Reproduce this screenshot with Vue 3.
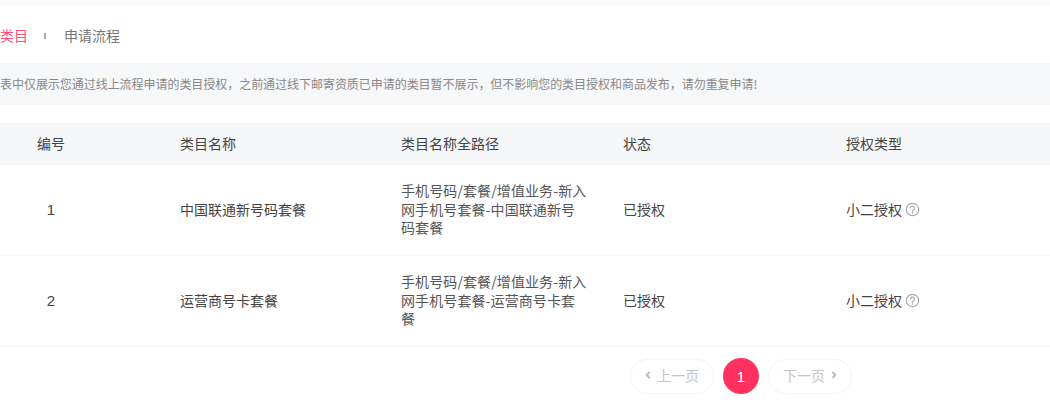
<script setup>
const rows = [
  { id: 1, name: '中国联通新号码套餐', path: ['手机号码/套餐/增值业务-新入', '网手机号套餐-中国联通新号', '码套餐'] },
  { id: 2, name: '运营商号卡套餐', path: ['手机号码/套餐/增值业务-新入', '网手机号套餐-运营商号卡套', '餐'] },
]
</script>

<template>
  <div class="page">
    <div class="strip"></div>
    <nav class="tabs">
      <span class="tab active">类目</span>
      <i class="sep"></i>
      <span class="tab">申请流程</span>
    </nav>
    <div class="notice">表中仅展示您通过线上流程申请的类目授权，之前通过线下邮寄资质已申请的类目暂不展示，但不影响您的类目授权和商品发布，请勿重复申请!</div>
    <div class="table">
      <div class="row head">
        <div class="num">编号</div>
        <div>类目名称</div>
        <div>类目名称全路径</div>
        <div>状态</div>
        <div>授权类型</div>
      </div>
      <div v-for="r in rows" :key="r.id" class="row body">
        <div class="num digit">{{ r.id }}</div>
        <div>{{ r.name }}</div>
        <div class="path"><div v-for="l in r.path" :key="l">{{ l }}</div></div>
        <div>已授权</div>
        <div class="auth">
          小二授权
          <svg class="help" width="15" height="15" viewBox="0 0 15 15" fill="none">
            <circle cx="7.5" cy="7.5" r="6.2" stroke="#aaa" stroke-width="1.2" />
            <path d="M5.5 6a2 2 0 1 1 3.1 1.7c-.7.4-1.1.8-1.1 1.6" stroke="#aaa" stroke-width="1.2" stroke-linecap="round" />
            <circle cx="7.5" cy="11" r=".8" fill="#aaa" />
          </svg>
        </div>
      </div>
    </div>
    <div class="pager">
      <button class="pg-btn" disabled>
        <svg width="6" height="8" viewBox="0 0 6 8" fill="none"><path d="M4.6 .8 1.8 4l2.8 3.2" stroke="#bbb" stroke-width="2" /></svg>
        上一页
      </button>
      <button class="pg-num">1</button>
      <button class="pg-btn" disabled>
        下一页
        <svg width="6" height="8" viewBox="0 0 6 8" fill="none"><path d="M1.4 .8 4.2 4 1.4 7.2" stroke="#bbb" stroke-width="2" /></svg>
      </button>
    </div>
  </div>
</template>

<style scoped>
.page {
  width: 1050px;
  height: 406px;
  overflow: hidden;
  background: #fff;
  font-family: "Noto Sans CJK SC", "Noto Sans", sans-serif;
  font-size: 14px;
  color: #444;
}
.strip {
  height: 6px;
  background: #fafafc;
}
.tabs {
  height: 57px;
  display: flex;
  align-items: center;
  box-sizing: border-box;
}
.tab {
  color: #777;
  line-height: 20px;
}
.tab.active {
  color: #ff4d78;
}
.sep {
  width: 2px;
  height: 6px;
  margin: 2px 18px 0 16px;
  background: #aaa;
}
.notice {
  height: 42px;
  line-height: 41px;
  background: #f7f8fa;
  font-size: 12px;
  letter-spacing: -0.04px;
  color: #888;
  white-space: nowrap;
}
.table {
  margin-top: 18px;
}
.row {
  display: grid;
  grid-template-columns: 180px 221px 222px 223px 1fr;
  align-items: center;
}
.head {
  height: 42px;
  background: #f6f7f9;
  padding-bottom: 2px;
  box-sizing: border-box;
}
.body {
  height: 91px;
  box-sizing: border-box;
  border-bottom: 1px solid #f5f5f5;
  padding-bottom: 2px;
}
.num {
  width: 102px;
  text-align: center;
}
.digit {
  font-size: 15px;
  font-family: "Liberation Sans", sans-serif;
}
.path {
  line-height: 18.5px;
  letter-spacing: 0.1px;
  color: #555;
  white-space: nowrap;
}
.auth {
  display: flex;
  align-items: center;
  gap: 3px;
}
.help {
  flex: none;
}
.pager {
  margin-top: 11px;
  margin-left: 630px;
  display: flex;
  align-items: center;
  gap: 9px;
}
.pg-btn {
  width: 84px;
  height: 35px;
  box-sizing: border-box;
  border: 1px solid #f5f5f5;
  border-radius: 18px;
  background: #fff;
  color: #c4c4c4;
  font: inherit;
  line-height: 20px;
  display: flex;
  align-items: center;
  justify-content: center;
  gap: 6px;
  padding: 0 0 2px;
}
.pg-num {
  width: 36px;
  height: 36px;
  border: none;
  border-radius: 50%;
  background: #ff315f;
  color: #fff;
  font-family: "Liberation Sans", sans-serif;
  font-size: 15px;
  padding: 0;
}
</style>
